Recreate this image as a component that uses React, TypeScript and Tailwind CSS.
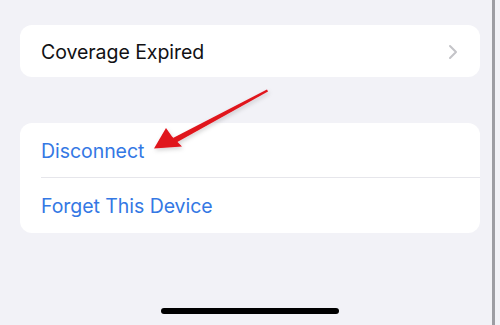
export default function App() {
  const actions = ['Disconnect', 'Forget This Device'];

  return (
    <div
      className="relative w-[500px] h-[325px] overflow-hidden bg-[#f2f2f7] flex flex-col px-5 pt-[25px]"
      style={{ fontFamily: 'Inter, "Noto Sans", sans-serif' }}
    >
      <div className="h-[52px] rounded-xl bg-white flex items-center justify-between pl-[21px] pr-[22px]">
        <span className="pt-[3px] text-[19.5px] font-[380] tracking-[-0.05px] text-[#111114]">Coverage Expired</span>
        <svg width="10" height="16" viewBox="0 0 10 16" fill="none" className="mt-[2px]">
          <path d="M2 2l6 6-6 6" stroke="#c4c4c8" strokeWidth="2" strokeLinecap="round" strokeLinejoin="round" />
        </svg>
      </div>

      <div className="mt-[46px] rounded-xl bg-white flex flex-col pl-[21px]">
        {actions.map((label, i) => (
          <div
            key={label}
            className={`h-[55px] flex items-center pt-[3px] text-[19.5px] font-[380] tracking-[-0.05px] text-[#3478e4] ${
              i === 0 ? 'border-b border-[#e6e6eb]' : ''
            }`}
          >
            {label}
          </div>
        ))}
      </div>

      <div className="mt-auto mb-[11px] self-center w-[178px] h-[6px] rounded-full bg-black" />

      {/* scroll indicator strip */}
      <div className="absolute top-0 right-[5px] w-[3px] h-full bg-[#9d9da3]" />

      {/* red annotation arrow */}
      <svg className="absolute left-0 top-0" width="500" height="325" viewBox="0 0 500 325">
        <defs>
          <filter id="sh" x="-20%" y="-20%" width="140%" height="140%">
            <feDropShadow dx="1" dy="2" stdDeviation="2" floodColor="#000" floodOpacity="0.18" />
          </filter>
        </defs>
        <g filter="url(#sh)">
          <path d="M267 89.5 L173 138 L175.5 143 L268 91.5 Z" fill="#e0141c" />
          <path d="M154 148.5 L166 128 L172 136.5 L182 146.5 Z" fill="#e0141c" />
        </g>
      </svg>
    </div>
  );
}
